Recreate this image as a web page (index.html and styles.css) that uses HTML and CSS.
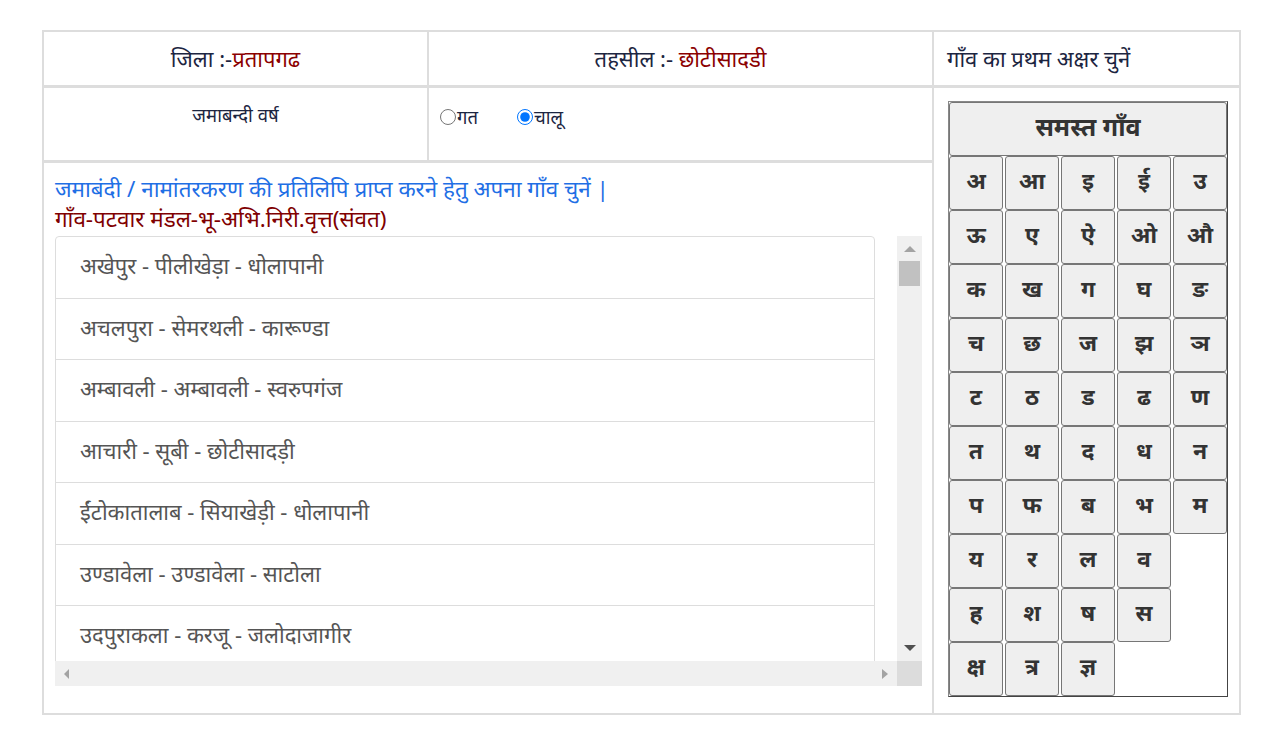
FILE: index.html
```html
<!DOCTYPE html>
<html lang="hi">
<head>
<meta charset="utf-8">
<title>जमाबंदी</title>
<link rel="stylesheet" href="styles.css">
</head>
<body>
<div class="board">
  <div class="cell head c1"><span class="lbl">जिला :-</span><span class="val">प्रतापगढ</span></div>
  <div class="cell head c2"><span class="lbl">तहसील :-&nbsp;</span><span class="val">छोटीसादडी</span></div>
  <div class="cell head c3 left"><span class="lbl">गाँव का प्रथम अक्षर चुनें</span></div>

  <div class="cell year">जमाबन्दी वर्ष</div>
  <div class="cell radios">
    <label class="opt"><input type="radio" name="yr">गत</label>
    <label class="opt"><input type="radio" name="yr" checked>चालू</label>
  </div>

  <div class="cell letters">
    <div class="keypad">
      <button class="key all">समस्त गाँव</button>
      <div class="keys">
        <button class="key">अ</button><button class="key">आ</button><button class="key">इ</button><button class="key">ई</button><button class="key">उ</button>
        <button class="key">ऊ</button><button class="key">ए</button><button class="key">ऐ</button><button class="key">ओ</button><button class="key">औ</button>
        <button class="key">क</button><button class="key">ख</button><button class="key">ग</button><button class="key">घ</button><button class="key">ङ</button>
        <button class="key">च</button><button class="key">छ</button><button class="key">ज</button><button class="key">झ</button><button class="key">ञ</button>
        <button class="key">ट</button><button class="key">ठ</button><button class="key">ड</button><button class="key">ढ</button><button class="key">ण</button>
        <button class="key">त</button><button class="key">थ</button><button class="key">द</button><button class="key">ध</button><button class="key">न</button>
        <button class="key">प</button><button class="key">फ</button><button class="key">ब</button><button class="key">भ</button><button class="key">म</button>
        <button class="key">य</button><button class="key">र</button><button class="key">ल</button><button class="key">व</button><span class="blank"></span>
        <button class="key">ह</button><button class="key">श</button><button class="key">ष</button><button class="key">स</button><span class="blank"></span>
        <button class="key">क्ष</button><button class="key">त्र</button><button class="key">ज्ञ</button><span class="blank"></span><span class="blank"></span>
      </div>
    </div>
  </div>

  <div class="cell villages">
    <div class="note">जमाबंदी / नामांतरकरण की प्रतिलिपि प्राप्त करने हेतु अपना गाँव चुनें |</div>
    <div class="legend">गाँव-पटवार मंडल-भू-अभि.निरी.वृत्त(संवत)</div>
    <div class="scrollbox">
      <div class="viewport">
        <ul class="list">
          <li>अखेपुर - पीलीखेड़ा - धोलापानी</li>
          <li>अचलपुरा - सेमरथली - कारूण्डा</li>
          <li>अम्बावली - अम्बावली - स्वरुपगंज</li>
          <li>आचारी - सूबी - छोटीसादड़ी</li>
          <li>ईंटोकातालाब - सियाखेड़ी - धोलापानी</li>
          <li>उण्डावेला - उण्डावेला - साटोला</li>
          <li>उदपुराकला - करजू - जलोदाजागीर</li>
        </ul>
      </div>
      <div class="vbar">
        <span class="arrow up"></span>
        <span class="thumb"></span>
        <span class="spacer"></span>
        <span class="arrow down"></span>
      </div>
      <div class="hbar">
        <span class="arrow lefta"></span>
        <span class="spacer"></span>
        <span class="arrow righta"></span>
      </div>
      <div class="corner"></div>
    </div>
  </div>
</div>
</body>
</html>
```

FILE: styles.css
```css
* { box-sizing: border-box; }

html, body {
  margin: 0;
  background: #fff;
}

body {
  font-family: "Noto Sans", "Liberation Sans", sans-serif;
  color: #333;
}

.board {
  margin: 30px 0 0 42px;
  width: 1199px;
  height: 685px;
  border: 1px solid #ddd;
  display: grid;
  grid-template-columns: 385px 505px 307px;
  grid-template-rows: 56px 75px 1fr;
}

.cell {
  border: 1px solid #ddd;
}

.head {
  border-bottom-width: 2px;
  display: flex;
  align-items: center;
  justify-content: center;
  font-size: 22px;
  padding-bottom: 2px;
}

.head.left {
  justify-content: flex-start;
  padding-left: 13px;
}

.lbl { color: #1c2541; }
.val { color: #8b0000; }

.year {
  border-bottom-width: 2px;
  text-align: center;
  font-size: 18.5px;
  color: #1c2541;
  padding-top: 14px;
}

.radios {
  border-bottom-width: 2px;
  padding: 16px 0 0 11px;
  display: flex;
  align-items: flex-start;
  gap: 39px;
  font-size: 18.5px;
  color: #1c2541;
}

.opt {
  display: flex;
  align-items: center;
}

.opt input {
  width: 16px;
  height: 16px;
  margin: 0 1px 0 0;
}

.letters {
  grid-column: 3;
  grid-row: 2 / span 2;
  padding: 13px 0 0 14px;
}

.keypad {
  width: 280px;
  border: 1px solid #444;
  border-top-color: #888;
  border-left-color: #888;
  background: #fff;
}

.key {
  display: flex;
  align-items: center;
  justify-content: center;
  height: 54px;
  padding: 0 0 6px;
  margin: 0;
  background: #efefef;
  border: 1px solid #767676;
  border-radius: 3px;
  font-family: "Noto Sans", "Liberation Sans", sans-serif;
  font-weight: bold;
  font-size: 23px;
  color: #333;
}

.key.all {
  width: 100%;
  font-size: 25px;
}

.keys {
  display: grid;
  grid-template-columns: repeat(5, 1fr);
  column-gap: 2px;
  grid-auto-rows: 54px;
}

.blank { display: block; }

.villages {
  grid-column: 1 / span 2;
  grid-row: 3;
  padding: 11px 0 0 11px;
}

.note {
  color: #1f6fe5;
  font-size: 22.4px;
  line-height: 30px;
  white-space: nowrap;
}

.legend {
  color: #800000;
  font-size: 22.4px;
  line-height: 30px;
  white-space: nowrap;
}

.scrollbox {
  margin-top: 2px;
  width: 867px;
  height: 450px;
  display: grid;
  grid-template-columns: 842px 25px;
  grid-template-rows: 425px 25px;
}

.viewport {
  overflow: hidden;
}

.list {
  list-style: none;
  margin: 0;
  padding: 0;
  width: 820px;
}

.list li {
  border: 1px solid #ddd;
  margin-bottom: -1px;
  padding: 14px 24px 18px;
  line-height: 28.5px;
  font-size: 22px;
  color: #555;
  background: #fff;
  white-space: nowrap;
}

.list li:first-child {
  border-top-left-radius: 4px;
  border-top-right-radius: 4px;
}

.vbar {
  background: #f0f0f0;
  display: flex;
  flex-direction: column;
  align-items: center;
}

.hbar {
  background: #f0f0f0;
  display: flex;
  align-items: center;
}

.spacer { flex: 1; }

.corner { background: #dcdcdc; }

.thumb {
  width: 21px;
  height: 25px;
  margin-top: 9px;
  background: #c1c1c1;
}

.arrow {
  width: 0;
  height: 0;
  border-style: solid;
}

.up {
  margin-top: 10px;
  border-width: 0 6px 6px 6px;
  border-color: transparent transparent #a3a3a3 transparent;
}

.down {
  margin-bottom: 10px;
  border-width: 6px 6px 0 6px;
  border-color: #505050 transparent transparent transparent;
}

.lefta {
  margin-left: 9px;
  border-width: 5px 5px 5px 0;
  border-color: transparent #a3a3a3 transparent transparent;
}

.righta {
  margin-right: 9px;
  border-width: 5px 0 5px 6px;
  border-color: transparent transparent transparent #a3a3a3;
}
```
